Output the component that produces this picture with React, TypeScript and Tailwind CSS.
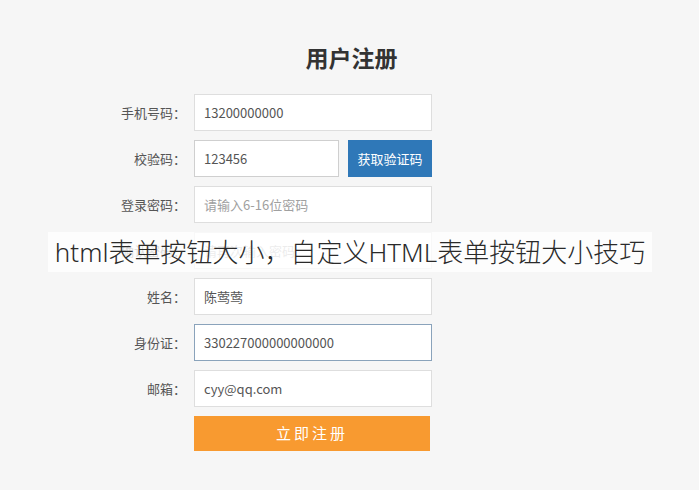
import React from 'react';

const font = { fontFamily: '"Noto Sans", "Noto Sans CJK SC", sans-serif' };

// 表单行
const rows = [
  { label: '手机号码：', value: '13200000000' },
  { label: '校验码：', value: '123456', code: true },
  { label: '登录密码：', placeholder: '请输入6-16位密码' },
  { label: '确认密码：', placeholder: '请再次输入密码' },
  { label: '姓名：', value: '陈莺莺' },
  { label: '身份证：', value: '330227000000000000', focus: true },
  { label: '邮箱：', value: 'cyy@qq.com' },
];

export default function App() {
  return (
    <div
      className="relative w-[699px] h-[490px] bg-[#f6f6f6] overflow-hidden"
      style={{ fontFamily: '"Noto Sans CJK SC", "Noto Sans", sans-serif' }}
    >
      <h1 className="pt-[42px] h-[72px] leading-[30px] text-center text-[23px] font-bold text-[#333] pl-[4px]">
        用户注册
      </h1>

      <div className="mt-[22px] flex flex-col gap-[9px] pl-[104px]">
        {rows.map((r) => (
          <div key={r.label} className="flex items-center h-[37px]">
            <label className="w-[84px] pr-[2px] text-right text-[13px] text-[#555]">{r.label}</label>
            <div className="ml-[6px] flex gap-[9px] w-[238px]">
              <input
                readOnly
                value={r.value ?? ''}
                placeholder={r.placeholder}
                className={`h-[37px] px-[9px] text-[13px] text-[#555] placeholder:text-[#a0a0a0] bg-white border outline-none ${
                  r.focus ? 'border-[#8aa3bb]' : r.code ? 'border-[#cfcfcf]' : 'border-[#dedede]'
                } ${r.code ? 'w-[145px]' : 'w-full'}`}
              />
              {r.code && (
                <button className="flex-1 h-[37px] bg-[#2f78b8] text-white text-[13px]">获取验证码</button>
              )}
            </div>
          </div>
        ))}
        <div className="flex">
          <div className="w-[90px]" />
          <button className="w-[236px] h-[35px] bg-[#f89a30] text-white text-[15px] tracking-[3px]">立即注册</button>
        </div>
      </div>

      {/* 标题遮罩 */}
      <div
        className="absolute left-[48px] top-[232px] w-[604px] h-[40px] bg-white/80 flex items-center justify-center text-[26px] text-[#2a2a2a] font-light"
        style={font}
      >
        html表单按钮大小，自定义HTML表单按钮大小技巧
      </div>
    </div>
  );
}
